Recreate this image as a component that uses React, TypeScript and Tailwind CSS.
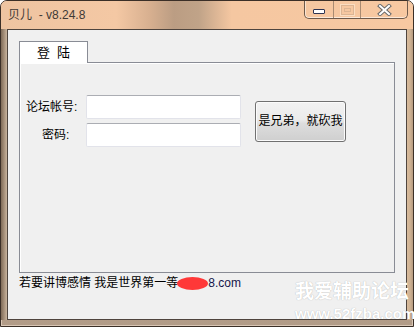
export default function App() {
  return (
    <div className="relative w-[414px] h-[327px] overflow-hidden font-['Liberation_Sans','Noto_Sans_CJK_SC',sans-serif] text-[12px] text-black">
      <div className="flex h-full flex-col rounded-t-[7px] border border-[#3b2f27] bg-[linear-gradient(180deg,#f0c6a3,#d8b697_40%,#b19b87)] shadow-[inset_0_0_0_1px_rgba(255,240,225,0.5)]">
        {/* title bar */}
        <div className="flex h-[28px] shrink-0 rounded-t-[6px] bg-[linear-gradient(90deg,#eec4a1_0%,#f4c8a4_28%,#d8b090_36%,#bb9d83_42%,#c0a388_48%,#f5c7a1_56%,#f7c8a1_100%)]">
          <span className="pl-[7px] pt-[7px] text-[12px] leading-[14px] text-[#3f3a36]">贝儿 &nbsp;- v8.24.8</span>
          <div className="ml-auto mr-[5px] flex h-[18px] overflow-hidden rounded-b-[5px] border border-t-0 border-[#6e5a4b] shadow-[inset_0_-1px_0_rgba(255,255,255,0.6),inset_1px_0_0_rgba(255,255,255,0.5)]">
            <div className="flex w-[28px] items-center justify-center pt-[3px]">
              <div className="h-[5px] w-[12px] rounded-[1px] border border-[#2f3552] bg-white" />
            </div>
            <div className="flex w-[27px] items-center justify-center border-l border-[#a98b72]">
              <div className="flex h-[10px] w-[13px] items-center justify-center border border-[#dcb594] shadow-[0_0_0_1px_rgba(255,235,215,0.6)]">
                <div className="h-[4px] w-[7px] border border-[#dcb594]" />
              </div>
            </div>
            <div className="flex w-[47px] items-center justify-center border-l border-[#a98b72]">
              <svg width="15" height="12" viewBox="0 0 15 12">
                <path d="M3 2 L12 10 M12 2 L3 10" stroke="#6a6a6a" strokeWidth="4" strokeLinecap="square" fill="none" />
                <path d="M3 2 L12 10 M12 2 L3 10" stroke="#ffffff" strokeWidth="2" strokeLinecap="square" fill="none" />
              </svg>
            </div>
          </div>
        </div>

        <div className="flex h-[291px] shrink-0">
          <div className="w-[6px] bg-[linear-gradient(90deg,#7f6b58,#a48e78_50%,#c8b49e)]" />
          <div className="w-[400px] border border-[#4e443d] bg-[#f0f0f0] pl-[11px] pt-[11px]">
            {/* tab header */}
            <div className="relative z-10 -mb-px flex h-[22px] w-[69px] items-center justify-center border border-b-0 border-[#898c95] bg-white text-[13px] leading-none">
              登&nbsp;&nbsp;陆
            </div>
            {/* tab pane */}
            <div className="h-[211px] w-[376px] border border-[#898c95] shadow-[inset_1px_1px_0_#ffffff] pl-[6px] pt-[32px]">
              <div className="flex items-center">
                <div className="grid grid-cols-[60px_155px] items-center gap-y-[4px]">
                  <span className="leading-[14px]">论坛帐号:</span>
                  <input className="h-[24px] w-[155px] rounded-[2px] border border-[#e2e3ea] border-t-[#abadb3] bg-white outline-none" />
                  <span className="pl-[16px] leading-[14px]">密码:</span>
                  <input type="password" className="h-[24px] w-[155px] rounded-[2px] border border-[#e2e3ea] border-t-[#abadb3] bg-white outline-none" />
                </div>
                <button className="ml-[14px] h-[41px] w-[91px] rounded-[3px] border border-[#707070] bg-[linear-gradient(180deg,#f2f2f2,#ebebeb_45%,#dddddd_55%,#cfcfcf)] text-[12px] leading-none text-black shadow-[inset_0_0_0_1px_#fbfbfb]">
                  是兄弟，就砍我
                </button>
              </div>
            </div>
            {/* status line */}
            <div className="mt-[3px] flex items-center leading-[14px]">
              <span>若要讲博感情 我是世界第一等</span>
              <span className="-ml-[1px] inline-block h-[13px] w-[31px] rounded-[50%] bg-[#ff3838]" />
              <span className="text-[#15154a]">8.com</span>
            </div>
          </div>
          <div className="w-[6px] bg-[linear-gradient(90deg,#d8bb9c,#cfb293_50%,#b59a80)]" />
        </div>
        <div className="flex-1" />
      </div>

      {/* watermark */}
      <div className="pointer-events-none absolute left-[295px] top-[280px] flex flex-col font-bold text-white [text-shadow:0_0_1px_rgba(0,0,0,0.3)]">
        <span className="text-[19px] leading-[24px]">我爱辅助论坛</span>
        <span className="mt-[2px] text-[15px] leading-[16px]">www.52fzba.com</span>
      </div>
    </div>
  )
}
